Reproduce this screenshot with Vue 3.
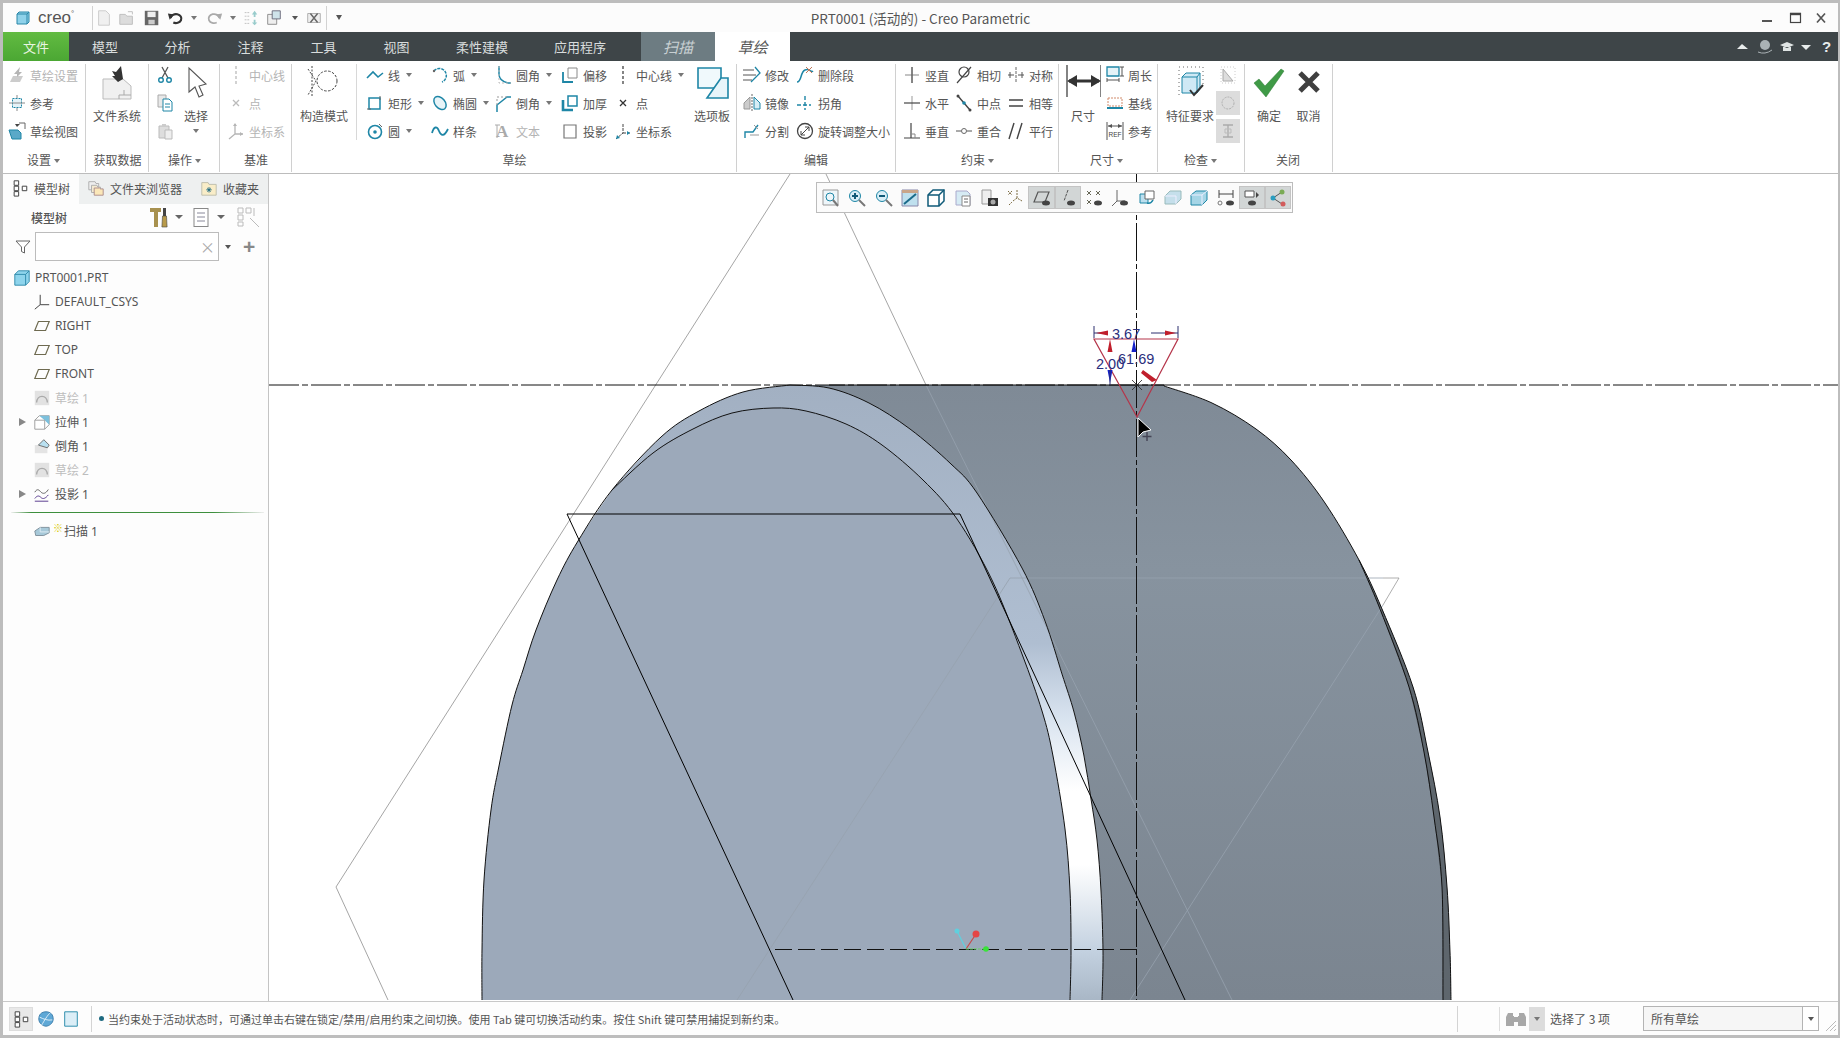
<template>
  <div class="app">
    <!-- 标题栏 -->
    <header class="titlebar">
      <div class="qat">
        <svg class="logo" width="16" height="16" viewBox="0 0 16 16" v-html="icons.logo"></svg>
        <span class="brand">creo<sup>°</sup></span>
        <i class="qat-sep"></i>
        <span v-for="q in quick" :key="q.k" class="qat-item" :style="{ width: q.w + 'px' }">
          <svg v-if="q.icon" width="18" height="18" viewBox="0 0 20 20" v-html="icons[q.icon]"></svg>
          <b v-else class="caret" :class="{ dark: q.dark }"></b>
        </span>
        <i class="qat-sep second"></i>
        <span class="qat-item last"><b class="caret dark bar"></b></span>
      </div>
      <div class="doc-title">PRT0001 (活动的) - Creo Parametric</div>
      <div class="win-btns">
        <svg width="74" height="18" viewBox="0 0 74 18">
          <path d="M6 12h10" stroke="#555" stroke-width="2" />
          <rect x="34.500" y="4.500" width="10" height="9" fill="none" stroke="#444" stroke-width="1.200" />
          <path d="M34 5h11" stroke="#444" stroke-width="2.400" />
          <path d="M61 4.500l8 9M69 4.500l-8 9" stroke="#555" stroke-width="1.700" />
        </svg>
      </div>
    </header>

    <!-- 选项卡 -->
    <nav class="tabbar">
      <span class="tab file">文件</span>
      <span v-for="t in tabs" :key="t.text" class="tab" :style="{ width: t.w + 'px' }">{{ t.text }}</span>
      <span class="tab ctx">扫描</span>
      <span class="tab active">草绘</span>
      <div class="tab-tools">
        <svg width="100" height="20" viewBox="0 0 100 20">
          <path d="M4 12l5-5 6 5z" fill="#e8ecec" />
          <circle cx="32" cy="8" r="5" fill="#aab2b5" />
          <path d="M25 15q7 3 14-2" stroke="#aab2b5" fill="none" />
          <path d="M47 8l7-3 7 3-7 3z M50 10v4h8v-4" fill="#dfe4e4" />
          <path d="M68 8h10l-5 5z" fill="#e8ecec" />
          <text x="89" y="15" class="help">?</text>
        </svg>
      </div>
    </nav>

    <!-- 功能区 -->
    <section class="ribbon">
      <div v-for="g in groups" :key="g.label" class="group" :class="'g-' + g.key">
        <div class="body">
          <template v-for="(c, i) in g.cols" :key="i">
            <div v-if="c.big" class="big" :class="{ sep: c.sep }" :style="{ width: c.w + 'px' }">
              <svg class="big-icon" :width="c.size || 36" :height="36" :viewBox="`0 0 ${c.size || 36} 36`" v-html="icons[c.icon]"></svg>
              <span class="big-text">{{ c.big }}</span>
              <b v-if="c.arrow" class="caret"></b>
            </div>
            <div v-else class="col" :style="{ width: c.w + 'px' }">
              <div v-for="it in c.items" :key="it.icon" class="item" :class="{ off: it.off }">
                <span class="ibox" :class="{ boxed: it.boxed }">
                  <svg width="20" height="20" viewBox="0 0 20 20" v-html="icons[it.icon]"></svg>
                </span>
                <span v-if="it.text" class="itext">{{ it.text }}</span>
                <b v-if="it.arrow" class="caret"></b>
              </div>
            </div>
          </template>
        </div>
        <div class="group-label">{{ g.label }}<b v-if="g.arrow" class="caret"></b></div>
      </div>
    </section>

    <div class="main">
      <!-- 模型树 -->
      <aside class="panel">
        <div class="panel-tabs">
          <span class="ptab on">
            <svg width="18" height="18" viewBox="0 0 20 20" v-html="icons.tree"></svg>模型树
          </span>
          <span class="ptab browser">
            <svg width="18" height="18" viewBox="0 0 20 20" v-html="icons.folders"></svg>文件夹浏览器
          </span>
          <span class="ptab fav">
            <svg width="18" height="18" viewBox="0 0 20 20" v-html="icons.favorite"></svg>收藏夹
          </span>
        </div>
        <div class="panel-tools">
          <strong>模型树</strong>
          <svg width="112" height="24" viewBox="0 0 112 24">
            <path d="M0 3h11v4H8v15H4V7H0z" fill="#a8914f" />
            <path d="M13 3h3v8h-3z" fill="#444" />
            <path d="M12.500 11h4l.6 11h-5.200z" fill="#b89a4a" stroke="#444" stroke-width=".6" />
            <path d="M25 10h8l-4 4z" fill="#666" />
            <rect x="44" y="3.500" width="14" height="18" fill="#fff" stroke="#888" />
            <path d="M47 8h8M47 12h8M47 16h8" stroke="#889" />
            <path d="M67 10h8l-4 4z" fill="#666" />
            <path d="M88 3h5v5h-5zM88 10h5v5h-5zM88 17h5v4h-5zM96 3h5v5h-5zM104 3v8M100 13l9 9" stroke="#bbb" fill="none" />
          </svg>
        </div>
        <div class="search">
          <svg width="16" height="16" viewBox="0 0 16 16">
            <path d="M1 2h14l-5.500 6v6l-3-1.500V8z" fill="#fff" stroke="#666" />
          </svg>
          <div class="search-box"><span>×</span></div>
          <b class="caret dark"></b>
          <span class="plus">+</span>
        </div>
        <ul class="tree">
          <li v-for="n in tree" :key="n.text" :class="{ root: n.root, muted: n.dim }">
            <b v-if="n.open" class="expander"></b>
            <svg width="18" height="18" viewBox="0 0 20 20" v-html="icons[n.icon]"></svg>
            <span>{{ n.text }}</span>
          </li>
          <li class="insert-line"></li>
          <li class="sweep">
            <svg width="18" height="18" viewBox="0 0 20 20" v-html="icons.sweep"></svg>
            <em>※</em><span>扫描 1</span>
          </li>
        </ul>
      </aside>

      <!-- 图形区 -->
      <div class="canvas">
        <svg class="scene" width="1569" height="827" viewBox="269 174 1569 827">
          <defs>
            <linearGradient id="sideFill" gradientUnits="userSpaceOnUse" x1="0" y1="385" x2="0" y2="1000">
              <stop offset="0" stop-color="#7f8a96" />
              <stop offset="0.3" stop-color="#87939f" />
              <stop offset="1" stop-color="#7b8590" />
            </linearGradient>
            <linearGradient id="bandFill" gradientUnits="userSpaceOnUse" x1="0" y1="385" x2="0" y2="1000">
              <stop offset="0" stop-color="#a2b0c2" />
              <stop offset="0.42" stop-color="#afbed1" />
              <stop offset="0.54" stop-color="#d8e3ef" />
              <stop offset="0.66" stop-color="#ffffff" />
              <stop offset="0.78" stop-color="#ffffff" />
              <stop offset="0.92" stop-color="#c3d1e0" />
              <stop offset="1" stop-color="#a9b7c6" />
            </linearGradient>
          </defs>

          <path :d="sidePath" fill="url(#sideFill)" />
          <path :d="stripePath" fill="#5e666d" />
          <path :d="bandPath" fill="url(#bandFill)" />
          <path :d="frontPath" fill="#9ca9ba" />

          <!-- 基准平面 -->
          <g class="datum">
            <path d="M790 174L336 887L388 1000" />
            <path d="M826 174L926 385" />
          </g>
          <g class="datum faint">
            <path d="M926 385L1232 1000" />
            <path d="M737 1000L1010 578L1383 578" />
            <path d="M1130 1000L1383 605" />
          </g>
          <path d="M1383 578H1399L1383 605" class="datum-end" />

          <!-- 轮廓 -->
          <path :d="outerEdge" class="edge" />
          <path :d="innerEdge" class="edge" />
          <path :d="bandEdge" class="edge" />
          <path :d="rimEdge" class="edge" />
          <path d="M793 1000L567 514H960L1185 1000" class="edge sketch" />

          <!-- 中心线 -->
          <path d="M269 385H1838" class="center" />
          <path d="M1136.500 174V1000" class="center vertical" />
          <path d="M775 949.500H1143" class="center short" />

          <!-- 坐标 -->
          <path d="M966 949L957 931" stroke="#5fd0de" stroke-width="1.200" />
          <path d="M966 949L976 934" stroke="#c64a4a" stroke-width="1.200" />
          <path d="M966 949H986" stroke="#62d460" stroke-dasharray="3 1" />
          <circle cx="957" cy="931" r="2.500" fill="#5fd0de" />
          <circle cx="976" cy="934" r="3.500" fill="#e54545" />
          <circle cx="986" cy="949" r="2.800" fill="#39e33a" />

          <!-- 尺寸标注 -->
          <path d="M1094 339H1178L1137 417Z" fill="none" stroke="#b5354a" stroke-width="1.200" />
          <path d="M1094 326V338M1178 326V338M1094 333H1108M1151 333H1178" stroke="#2c2f6e" />
          <path d="M1096 333l12-2.500v5zM1176 333l-11-2.500v5z M1110 339l-2.500 13h5z M1143 370l14 10-5 2-11-9z" fill="#c01f2c" />
          <path d="M1134 339l-2.500 13h5zM1110 383l-2.500-13h5z" fill="#1421c8" />
          <path d="M1110 370V385" stroke="#2c2f6e" />
          <path d="M1132 380l10 10M1142 380l-10 10" stroke="#222" stroke-width=".8" />
          <text x="1112" y="339" class="dim-text">3.67</text>
          <text x="1118" y="364" class="dim-text">61.69</text>
          <text x="1096" y="369" class="dim-text">2.00</text>

          <!-- 光标 -->
          <path d="M1138 418V437L1143 432L1151 430Z" fill="#000" stroke="#fff" />
          <path d="M1147 432v9M1142.500 436.500h9" stroke="#445" stroke-width="1.400" />
        </svg>

        <div class="float-bar">
          <span v-for="(b, i) in viewBtns" :key="i" class="fb" :class="{ on: b.on }">
            <svg width="20" height="20" viewBox="0 0 20 20" v-html="icons[b.icon]"></svg>
          </span>
        </div>
      </div>
    </div>

    <!-- 状态栏 -->
    <footer class="statusbar">
      <span class="st-btn boxed">
        <svg width="18" height="18" viewBox="0 0 20 20" v-html="icons.tree"></svg>
      </span>
      <span class="st-btn">
        <svg width="18" height="20" viewBox="0 0 20 20" v-html="icons.globe"></svg>
      </span>
      <span class="st-btn">
        <svg width="18" height="20" viewBox="0 0 20 20" v-html="icons.pane"></svg>
      </span>
      <i class="st-sep"></i>
      <i class="bullet"></i>
      <span class="msg">当约束处于活动状态时，可通过单击右键在锁定/禁用/启用约束之间切换。使用 Tab 键可切换活动约束。按住 Shift 键可禁用捕捉到新约束。</span>
      <i class="st-sep far"></i>
      <span class="finder">
        <svg width="24" height="20" viewBox="0 0 24 20">
          <path d="M4 4h5v3h1v10H2V8zM15 4h5l2 4v9h-8V7h1zM10 8h4v5h-4z" fill="#a8a8a8" />
        </svg>
        <em><b class="caret"></b></em>
      </span>
      <span class="picked">选择了 3 项</span>
      <div class="filter">
        <span>所有草绘</span>
        <em><b class="caret dark"></b></em>
      </div>
      <svg class="grip" width="12" height="12" viewBox="0 0 12 12">
        <path d="M2 12L12 2M6 12l6-6M10 12l2-2" stroke="#bbb" />
      </svg>
    </footer>
  </div>
</template>

<script setup>
// 把采样点连成平滑曲线
const smooth = (pts) => {
  let d = `M${pts[0][0]} ${pts[0][1]}`;
  for (let i = 0; i < pts.length - 1; i++) {
    const a = pts[i - 1] || pts[i];
    const b = pts[i];
    const c = pts[i + 1];
    const e = pts[i + 2] || c;
    const c1 = [b[0] + (c[0] - a[0]) / 6, b[1] + (c[1] - a[1]) / 6];
    const c2 = [c[0] - (e[0] - b[0]) / 6, c[1] - (e[1] - b[1]) / 6];
    d += `C${c1[0].toFixed(1)} ${c1[1].toFixed(1)} ${c2[0].toFixed(1)} ${c2[1].toFixed(1)} ${c[0]} ${c[1]}`;
  }
  return d;
};
const lineTo = (pts) => pts.map((p) => `L${p[0]} ${p[1]}`).join("");

const leftOuter = [[482, 1000], [482, 950], [484, 880], [491, 810], [499, 766], [512, 705], [523, 670], [536, 630], [557, 580], [578, 541], [612, 490], [661, 437], [699, 411], [743, 392], [790, 385]];
const topOuter = [[790, 385], [829, 388], [869, 403], [910, 429], [951, 464], [977, 493], [1022, 568], [1045, 621], [1062, 674], [1074, 712], [1084, 756], [1091, 799], [1097, 840], [1101, 891], [1103, 952], [1102, 1000]];
const inner = [[612, 490], [653, 453], [693, 429], [732, 413], [773, 408], [806, 411], [846, 424], [882, 445], [923, 480], [957, 519], [992, 580], [1022, 654], [1042, 711], [1053, 756], [1065, 829], [1070, 891], [1071, 952], [1070, 1000]];
const sideOuter = [[1164, 386], [1212, 403], [1256, 429], [1291, 460], [1325, 503], [1359, 560], [1382, 609], [1413, 687], [1428, 752], [1440, 817], [1447, 887], [1450, 952], [1451, 1000]];
const stripeInner = [[1359, 560], [1380, 609], [1409, 687], [1424, 752], [1434, 817], [1442, 887], [1443, 1000]];

const rev = (a) => [...a].reverse();
const frontPath = smooth(leftOuter.slice(0, 11)) + smooth(inner).replace(/^M/, "L") + "Z";
const bandPath = smooth(leftOuter.slice(10)) + smooth(topOuter).replace(/^M/, "L") + lineTo(rev(inner)) + "Z";
const sidePath = "M790 385H1164" + smooth(sideOuter).replace(/^M/, "L") + "L1102 1000" + lineTo(rev(topOuter)) + "Z";
const stripePath = smooth(sideOuter.slice(5)) + lineTo(rev(stripeInner)) + "Z";
const outerEdge = smooth(leftOuter);
const innerEdge = smooth(inner);
const bandEdge = smooth(topOuter);
const rimEdge = "M829 385H1164" + smooth(sideOuter).replace(/^M/, "L") + "M1359 560" + smooth(stripeInner).replace(/^M/, "L");

const quick = [
  { k: "new", icon: "qnew", w: 22 },
  { k: "open", icon: "qopen", w: 24 },
  { k: "save", icon: "qsave", w: 26 },
  { k: "undo", icon: "qundo", w: 22 },
  { k: "c1", w: 14 },
  { k: "redo", icon: "qredo", w: 26 },
  { k: "c2", w: 12 },
  { k: "regen", icon: "qregen", w: 24 },
  { k: "win", icon: "qwin", w: 22 },
  { k: "c3", w: 20, dark: true },
  { k: "close", icon: "qclose", w: 18 },
];

const tabs = [
  { text: "模型", w: 72 },
  { text: "分析", w: 73 },
  { text: "注释", w: 73 },
  { text: "工具", w: 73 },
  { text: "视图", w: 73 },
  { text: "柔性建模", w: 98 },
  { text: "应用程序", w: 98 },
];

const groups = [
  {
    key: "settings", label: "设置", arrow: true,
    cols: [{ w: 78, items: [
      { icon: "setup", text: "草绘设置", off: true },
      { icon: "reference", text: "参考" },
      { icon: "sview", text: "草绘视图" },
    ] }],
  },
  {
    key: "fetch", label: "获取数据",
    cols: [{ big: "文件系统", icon: "filesys", w: 62, size: 36 }],
  },
  {
    key: "ops", label: "操作", arrow: true,
    cols: [
      { w: 21, items: [{ icon: "cut" }, { icon: "copy" }, { icon: "paste", off: true }] },
      { big: "选择", icon: "cursor", w: 40, arrow: true },
    ],
  },
  {
    key: "datum", label: "基准",
    cols: [{ w: 66, items: [
      { icon: "cline", text: "中心线", off: true },
      { icon: "point", text: "点", off: true },
      { icon: "csys", text: "坐标系", off: true },
    ] }],
  },
  {
    key: "sketch", label: "草绘",
    cols: [
      { big: "构造模式", icon: "construct", w: 64, sep: true },
      { w: 65, items: [
        { icon: "line", text: "线", arrow: true },
        { icon: "rect", text: "矩形", arrow: true },
        { icon: "circle", text: "圆", arrow: true },
      ] },
      { w: 63, items: [
        { icon: "arc", text: "弧", arrow: true },
        { icon: "ellipse", text: "椭圆", arrow: true },
        { icon: "spline", text: "样条" },
      ] },
      { w: 67, items: [
        { icon: "fillet", text: "圆角", arrow: true },
        { icon: "chamfer", text: "倒角", arrow: true },
        { icon: "stext", text: "文本", off: true },
      ] },
      { w: 53, items: [
        { icon: "offset", text: "偏移" },
        { icon: "thicken", text: "加厚" },
        { icon: "project", text: "投影" },
      ] },
      { w: 74, items: [
        { icon: "cline2", text: "中心线", arrow: true },
        { icon: "point2", text: "点" },
        { icon: "csys2", text: "坐标系" },
      ] },
      { big: "选项板", icon: "palette", w: 50 },
    ],
  },
  {
    key: "edit", label: "编辑",
    cols: [
      { w: 53, items: [
        { icon: "modify", text: "修改" },
        { icon: "mirror", text: "镜像" },
        { icon: "divide", text: "分割" },
      ] },
      { w: 101, items: [
        { icon: "delseg", text: "删除段" },
        { icon: "corner", text: "拐角" },
        { icon: "rotate", text: "旋转调整大小" },
      ] },
    ],
  },
  {
    key: "cons", label: "约束", arrow: true,
    cols: [
      { w: 52, items: [
        { icon: "vert", text: "竖直" },
        { icon: "horz", text: "水平" },
        { icon: "perp", text: "垂直" },
      ] },
      { w: 52, items: [
        { icon: "tangent", text: "相切" },
        { icon: "midpt", text: "中点" },
        { icon: "coinc", text: "重合" },
      ] },
      { w: 52, items: [
        { icon: "symm", text: "对称" },
        { icon: "equal", text: "相等" },
        { icon: "para", text: "平行" },
      ] },
    ],
  },
  {
    key: "dims", label: "尺寸", arrow: true,
    cols: [
      { big: "尺寸", icon: "dim", w: 44 },
      { w: 52, items: [
        { icon: "perim", text: "周长" },
        { icon: "base", text: "基线" },
        { icon: "dimref", text: "参考" },
      ] },
    ],
  },
  {
    key: "check", label: "检查", arrow: true,
    cols: [
      { big: "特征要求", icon: "feat", w: 56 },
      { w: 24, items: [
        { icon: "chk1", off: true },
        { icon: "chk2", boxed: true },
        { icon: "chk3", boxed: true },
      ] },
    ],
  },
  {
    key: "close", label: "关闭",
    cols: [
      { big: "确定", icon: "ok", w: 40 },
      { big: "取消", icon: "cancel", w: 39 },
    ],
  },
];

const tree = [
  { text: "PRT0001.PRT", icon: "part", root: true },
  { text: "DEFAULT_CSYS", icon: "tcsys" },
  { text: "RIGHT", icon: "plane" },
  { text: "TOP", icon: "plane" },
  { text: "FRONT", icon: "plane" },
  { text: "草绘 1", icon: "tsketch", dim: true },
  { text: "拉伸 1", icon: "extrude", open: true },
  { text: "倒角 1", icon: "tchamfer" },
  { text: "草绘 2", icon: "tsketch", dim: true },
  { text: "投影 1", icon: "tproject", open: true },
];

const viewBtns = [
  { icon: "vRefit" }, { icon: "vIn" }, { icon: "vOut" }, { icon: "vRepaint" }, { icon: "vCube" },
  { icon: "vViews" }, { icon: "vCam" }, { icon: "vDatums" }, { icon: "vPlane", on: true },
  { icon: "vAxis", on: true }, { icon: "vPts" }, { icon: "vCsys" }, { icon: "vRot" },
  { icon: "vBox" }, { icon: "vGlass" }, { icon: "vDims" }, { icon: "vCons", on: true },
  { icon: "vNodes", on: true },
];

const T = "#1e86a6";
const G = "#8a8a8a";
const icons = {
  logo: '<path d="M2 4l2-2h10v10l-2 2H2z" fill="#8fd2ea" stroke="#2a87a8"/><path d="M2 4h10v10M12 4l2-2" fill="none" stroke="#2a87a8"/>',
  qnew: '<path d="M4 2h8l4 4v12H4z" fill="#f0f0f0" stroke="#c8c8c8"/>',
  qopen: '<path d="M2 6h6l2 2h6v9H2z" fill="#dcdcdc" stroke="#bbb"/><path d="M11 3h5v3" stroke="#bbb" fill="none"/>',
  qsave: '<path d="M2 2h15v16H2z" fill="#666"/><path d="M5 3h9v6H5z" fill="#eee"/><path d="M6 12h7v5H6z" fill="#ccc"/>',
  qundo: '<path d="M4 10a6 5 0 1 1 3 5" fill="none" stroke="#333" stroke-width="2.400"/><path d="M1 5l7 1-5 6z" fill="#333"/>',
  qredo: '<path d="M16 10a6 5 0 1 0-3 5" fill="none" stroke="#aaa" stroke-width="2"/><path d="M19 5l-7 1 5 6z" fill="#aaa"/>',
  qregen: '<path d="M3 4h5M3 8h5M3 12h5M3 16h5" stroke="#bbb" stroke-dasharray="2 1"/><path d="M11 6l3-4 3 4h-2v3h-2V6zM13 12h2v3h2l-3 3-3-3h2z" fill="#9cc"/>',
  qwin: '<path d="M3 6h10v11H3z" fill="#eee" stroke="#888"/><path d="M8 2h9v9H8z" fill="#cfe3ea" stroke="#667"/>',
  qclose: '<path d="M3 5h14v10H3z" fill="#eee" stroke="#aaa"/><path d="M6 5l8 10M14 5l-8 10" stroke="#666" stroke-width="1.600"/>',
  setup: '<path d="M3 17l3-6h10l-3 6z" fill="#ccc"/><path d="M13 2L7 9h3v3l5-5h-3z" fill="#b5b5b5"/>',
  reference: `<rect x="5.500" y="5.500" width="9" height="9" fill="#e6f3f8" stroke="${T}" stroke-dasharray="2 1"/><path d="M2 10h16M10 2v3M10 15v3" stroke="${G}"/>`,
  sview: `<path d="M2 9h9l3 3v6H5z" fill="#5aa9c8" stroke="${T}"/><path d="M12 2h6v6" fill="none" stroke="#666"/><path d="M8 3l5 0-3 3z" fill="#444"/>`,
  filesys: '<path d="M4 14h20l8 7v13H4z" fill="#f0f0f0" stroke="#bbb"/><path d="M20 30h12M20 30v4M25 25v5" stroke="#aaa"/><path d="M24 14l-2-13-5 6-4-1 3 5-3 0 6 6z" fill="#333"/>',
  cut: `<path d="M7 2l6 11M13 2L7 13" stroke="#555" stroke-width="1.300"/><circle cx="6" cy="15" r="2.300" fill="none" stroke="${T}" stroke-width="1.400"/><circle cx="14" cy="15" r="2.300" fill="none" stroke="${T}" stroke-width="1.400"/>`,
  copy: `<path d="M3 2h8v12H3z" fill="#e8e8e8" stroke="#aaa"/><path d="M8 6h6l3 3v9H8z" fill="#fff" stroke="${T}"/><path d="M10 11h5M10 14h5" stroke="${T}"/>`,
  paste: '<path d="M4 5h10v12H4z" fill="#ddd" stroke="#bbb"/><path d="M7 3h4v3H7z" fill="#ccc"/><path d="M10 9h7v9h-7z" fill="#eee" stroke="#bbb"/>',
  cursor: '<path d="M11 3v24l6-5 4 10 4-2-4-9 7-2z" fill="#fff" stroke="#555" stroke-width="1.100"/>',
  cline: '<path d="M10 1v18" stroke="#bbb" stroke-dasharray="3 2" stroke-width="1.300"/>',
  point: '<path d="M7 7l6 6M13 7l-6 6" stroke="#bbb" stroke-width="1.300"/>',
  csys: '<path d="M9 3v10l-6 5M9 13h8" stroke="#b5b5b5" stroke-width="1.300" fill="none"/><path d="M17 13l-3-2v4z M9 2l-2 3h4z" fill="#b5b5b5"/>',
  construct: '<path d="M6 1v31M2 4l8 12-8 14" fill="none" stroke="#444" stroke-dasharray="2 1.500"/><circle cx="21" cy="16" r="10" fill="none" stroke="#444" stroke-dasharray="2.500 1.500"/>',
  line: `<path d="M2 13l6-6 5 5 5-4" fill="none" stroke="${T}" stroke-width="1.600"/>`,
  rect: `<path d="M4 5h11v11H4z" fill="none" stroke="${T}" stroke-width="1.500"/><path d="M15 3v4M2 16h4" stroke="#666"/>`,
  circle: `<circle cx="10" cy="11" r="6.500" fill="none" stroke="${T}" stroke-width="1.600"/><circle cx="10" cy="11" r="1.800" fill="${T}"/><path d="M14 3l3 3" stroke="#666"/>`,
  arc: `<path d="M4 6a7 7 0 1 1 8 11" fill="none" stroke="${T}" stroke-width="1.500" stroke-dasharray="3 1"/><circle cx="4" cy="6" r="1.200" fill="#666"/>`,
  ellipse: `<ellipse cx="10" cy="10" rx="5" ry="7.500" transform="rotate(-40 10 10)" fill="#e8f4f8" stroke="${T}" stroke-width="1.500"/>`,
  spline: `<path d="M2 12c2-7 5-7 7-2s5 6 9-2" fill="none" stroke="${T}" stroke-width="1.800"/>`,
  fillet: `<path d="M6 1v8q0 7 9 9h3" fill="none" stroke="${T}" stroke-width="1.500"/><path d="M6 1v17h12" fill="none" stroke="#bbb" stroke-dasharray="2 2"/>`,
  chamfer: `<path d="M4 19V12L14 4h4" fill="none" stroke="${T}" stroke-width="1.500"/><path d="M4 12V4h10" fill="none" stroke="#999" stroke-dasharray="2 2"/>`,
  stext: '<text x="3" y="16" font-family="Liberation Serif" font-size="17" fill="#aaa" font-weight="700">A</text><path d="M2 4h5M4 4v13" stroke="#aaa"/>',
  offset: `<path d="M8 3h9v10H8z" fill="#fff" stroke="${G}"/><path d="M3 7v10h10" fill="none" stroke="${T}" stroke-width="1.800"/>`,
  thicken: `<path d="M8 3h9v10H8z" fill="#fff" stroke="${T}" stroke-width="1.500"/><path d="M3 7v10h10" fill="none" stroke="${T}" stroke-width="2.600"/>`,
  project: `<path d="M4 4h12v13H4z" fill="#fff" stroke="#777" stroke-width="1.200"/>`,
  cline2: '<path d="M10 1v18" stroke="#444" stroke-dasharray="3 2" stroke-width="1.300"/>',
  point2: '<path d="M7 7l6 6M13 7l-6 6" stroke="#333" stroke-width="1.300"/>',
  csys2: `<path d="M10 3v9l-7 6M10 12h7" stroke="#444" fill="none" stroke-dasharray="3 1"/><path d="M3 18l1-4 3 3zM17 12l-3-2v4z" fill="${T}"/>`,
  palette: `<path d="M4 3h23v20H4z" fill="#f0f9fc" stroke="${T}" stroke-width="1.600"/><path d="M27 13L13 33h21V13z" fill="#e8f5fa" stroke="${T}" stroke-width="1.600"/>`,
  modify: `<path d="M1 5h11M1 10h13M1 15h9" stroke="#555"/><path d="M13 2l5 6-9 9" fill="none" stroke="${T}" stroke-width="1.300"/>`,
  mirror: `<path d="M10 1v18" stroke="#666" stroke-dasharray="2 1"/><path d="M8 4L2 10v6h6z" fill="#ccc" stroke="#999"/><path d="M12 4l6 6v6h-6z" fill="#d6edf5" stroke="${T}"/>`,
  divide: `<path d="M3 17v-6h8l5-7" fill="none" stroke="${T}" stroke-width="1.400"/><path d="M12 4l4 4M8 14h9" stroke="#999"/>`,
  delseg: `<path d="M2 17c5 0 3-10 8-12s6 3 8 1" fill="none" stroke="${T}" stroke-width="1.500"/><path d="M11 2l6 6M17 2l-6 6" stroke="#c0785a"/>`,
  corner: `<path d="M2 12h14M10 3v14" stroke="${T}" stroke-width="1.400" stroke-dasharray="4 2"/>`,
  rotate: '<circle cx="10" cy="10" r="7.500" fill="none" stroke="#444" stroke-width="1.300"/><path d="M6 14l8-8M14 6h-4M14 6v4M6 14h4M6 14v-4" stroke="#444" fill="none"/>',
  vert: `<path d="M10 2v16M3 10h14" stroke="#888" stroke-width="1.200"/><path d="M10 2v16" stroke="#555"/>`,
  horz: '<path d="M10 3v14" stroke="#999"/><path d="M2 10h16" stroke="#444" stroke-width="1.200"/>',
  perp: '<path d="M9 2v15M2 17h16" stroke="#444" stroke-width="1.200"/><path d="M9 13h4v4" fill="none" stroke="#888"/>',
  tangent: '<circle cx="10" cy="7" r="5" fill="none" stroke="#444" stroke-width="1.200"/><path d="M3 18L17 2" stroke="#444" stroke-width="1.200"/>',
  midpt: `<path d="M4 3l12 14" stroke="#444" stroke-width="1.400"/><circle cx="4" cy="3" r="1.500" fill="#444"/><circle cx="10" cy="10" r="1.800" fill="${T}"/><circle cx="16" cy="17" r="1.500" fill="#444"/>`,
  coinc: '<path d="M2 10h5M13 10h5" stroke="#555"/><circle cx="10" cy="10" r="2.500" fill="#fff" stroke="#666"/>',
  symm: '<path d="M10 2v16" stroke="#666" stroke-dasharray="3 1"/><path d="M2 10h6M12 10h6M4 7v6M16 7v6" stroke="#555"/>',
  equal: '<path d="M3 7h14M3 13h14" stroke="#444" stroke-width="1.400"/>',
  para: '<path d="M8 2L3 18M16 2l-5 16" stroke="#444" stroke-width="1.400"/>',
  dim: '<path d="M2 0v32M36 0v32" stroke="#333" stroke-width="1.200"/><path d="M4 16h30" stroke="#333" stroke-width="3"/><path d="M2 16l10-6v12zM36 16l-10-6v12z" fill="#333"/>',
  perim: `<path d="M2 2h12v9H2z" fill="#e5f3f8" stroke="${T}" stroke-width="1.300"/><path d="M17 2v9M15 2h4M15 11h4M2 15h12M2 13v4M14 13v4" stroke="#555"/>`,
  base: `<path d="M3 5h14v8H3z" fill="#fff" stroke="#d08a6a" stroke-dasharray="2 1"/><path d="M2 15h16" stroke="${T}" stroke-width="2"/>`,
  dimref: '<path d="M2 1v18M18 1v18M3 5h14" stroke="#555"/><path d="M3 5l4-2v4zM17 5l-4-2v4z" fill="#555"/><text x="3.500" y="16" font-family="Liberation Sans" font-size="6.500" fill="#444">REF</text>',
  feat: `<path d="M7 2h24M7 30V2M31 2v20" stroke="#666" stroke-dasharray="1 3"/><path d="M10 12l4-4h14v16l-3 4H10z" fill="#cfe9f5" stroke="${T}"/><path d="M10 12h15v16M25 12l3-4" fill="none" stroke="${T}"/><path d="M18 25l4 5 9-10" fill="none" stroke="#333" stroke-width="2"/>`,
  chk1: '<path d="M3 2h14v16H3z" fill="none" stroke="#ccc" stroke-dasharray="1 2"/><path d="M5 4l10 12H5z" fill="#ddd" stroke="#aaa"/>',
  chk2: '<circle cx="10" cy="10" r="6" fill="none" stroke="#b0b0b0" stroke-dasharray="2 1"/>',
  chk3: '<path d="M5 4h10M5 16h10M10 4v12" stroke="#aaa" stroke-width="1.300"/><path d="M7 8h6v4H7z" fill="none" stroke="#bbb"/>',
  ok: '<path d="M3 18l5-4 6 7L30 4l3 2-18 26z" fill="#3f9a46" stroke="#2d7a35" stroke-width=".5"/>',
  cancel: '<path d="M9 8l18 18M27 8L9 26" stroke="#3f3f3f" stroke-width="5"/>',
  tree: '<path d="M3.500 2h5v5h-5zM3.500 8h5v5h-5zM3.500 14h5v5h-5zM12.500 8h5v5h-5z" fill="#fff" stroke="#444" stroke-width="1.100"/>',
  folders: '<path d="M2 3h7l1 2h3v7H2z" fill="#eee" stroke="#aaa"/><path d="M5 7h6l1 2h3v6H5z" fill="#f4ead0" stroke="#aaa"/><path d="M8 10h6l1 1h3v7H8z" fill="#fbe7b8" stroke="#a88"/>',
  favorite: '<path d="M2 4h7l1 2h8v12H2z" fill="#f9edc8" stroke="#bba"/><path d="M10 9v6M7 12h6M8 10l4 4M12 10l-4 4" stroke="#1e6a80"/>',
  part: '<path d="M2 6l4-4h12v12l-4 4H2z" fill="#8ed4ec" stroke="#2a87a8"/><path d="M2 6h12v12M14 6l4-4" fill="none" stroke="#2a87a8"/>',
  tcsys: '<path d="M8 2v11l-6 5M8 13h10" stroke="#444" stroke-width="1.100" fill="none"/>',
  plane: '<path d="M6 5h12l-4 10H2z" fill="none" stroke="#6e6a50" stroke-width="1.300"/>',
  tsketch: '<path d="M2 2h16v16H2z" fill="#e2e2e2"/><path d="M4 15c1-9 11-9 12 0" fill="none" stroke="#aaa" stroke-width="1.500"/>',
  extrude: `<path d="M2 8l5-5h11v10l-5 5H2z" fill="#fff" stroke="#999"/><path d="M7 3h11v10L13 8z" fill="#7cc0dc"/><path d="M2 8h11v10" fill="none" stroke="#999"/>`,
  tchamfer: '<path d="M2 9h14v9H2z" fill="#e4e4e4"/><path d="M6 9l6-6 6 6-2 3z" fill="#b9e0f0" stroke="#666"/>',
  tproject: '<path d="M2 8c3-5 5-2 7 0s5 2 8-3" fill="none" stroke="#666" stroke-width="1.100"/><path d="M2 15c3-4 5-3 7-1s5 1 8-3M2 18h15" fill="none" stroke="#5b3e90" stroke-width="1.100"/>',
  sweep: '<path d="M2 10l6-4h10v6l-6 3H3z" fill="#a7c9d9" stroke="#7a8c99"/><path d="M8 6v5h10" fill="none" stroke="#e2eef5"/>',
  globe: '<path d="M10 2c5 0 8 3 8 8s-5 8-8 8-8-3-8-8 3-8 8-8z" fill="#5fa8d6" stroke="#3a7ba8"/><path d="M5 17C8 12 12 5 15 3M3 8c4 2 9 4 14 3" stroke="#e7f3fb" fill="none"/>',
  pane: `<path d="M3 2h14v16H3z" fill="#dbeef7" stroke="${T}"/>`,
  vRefit: `<path d="M2 2h15v15H2z" fill="#eef6fa" stroke="#999"/><circle cx="9" cy="9" r="4" fill="none" stroke="${T}"/><path d="M12 12l5 6" stroke="#777" stroke-width="2"/>`,
  vIn: `<circle cx="8" cy="8" r="5.500" fill="#d8eef7" stroke="${T}"/><path d="M5 8h6M8 5v6" stroke="#0f5a78" stroke-width="2"/><path d="M12 12l6 6" stroke="#777" stroke-width="2"/>`,
  vOut: `<circle cx="8" cy="8" r="5.500" fill="#d8eef7" stroke="${T}"/><path d="M5 8h6" stroke="#0f5a78" stroke-width="2"/><path d="M12 12l6 6" stroke="#777" stroke-width="2"/>`,
  vRepaint: `<path d="M2 2h16v16H2z" fill="#bfe0ee" stroke="#88a"/><path d="M2 2h16v3H2z" fill="#c9a58a"/><path d="M4 16L16 6" stroke="#1a6a8a" stroke-width="2"/>`,
  vCube: '<path d="M2 7l5-5h11v11l-5 5H2z" fill="#fff" stroke="#0f5a78" stroke-width="1.500"/><path d="M2 7h11v11M13 7l5-5" fill="none" stroke="#0f5a78" stroke-width="1.500"/>',
  vViews: `<path d="M3 3h11l3 3v11H3z" fill="#d6ebf4" stroke="#aac"/><path d="M9 8h8v10H9z" fill="#fff" stroke="#888"/><path d="M11 11h4M11 14h4" stroke="#666"/>`,
  vCam: '<path d="M3 2h9v14H3z" fill="#eee" stroke="#999"/><path d="M9 10h10v8H9z" fill="#333"/><circle cx="14" cy="14" r="2.500" fill="#aaa"/>',
  vDatums: '<path d="M3 3l4 4M7 3L3 7M12 2v8M8 13l4-3 5 3M4 17l3-3" stroke="#7a6a40" stroke-dasharray="2 1" fill="none"/>',
  vPlane: '<path d="M6 4h11l-4 10H2z" fill="none" stroke="#555" stroke-width="1.200"/><ellipse cx="14" cy="15" rx="4" ry="2.500" fill="#444"/>',
  vAxis: '<path d="M10 2L6 13" stroke="#555" stroke-dasharray="3 1"/><ellipse cx="13" cy="15" rx="4" ry="2.500" fill="#444"/>',
  vPts: '<path d="M3 3l4 4M7 3L3 7M12 3l4 4M16 3l-4 4M3 12l4 4M7 12l-4 4" stroke="#665" /><ellipse cx="14" cy="15" rx="4" ry="2.500" fill="#444"/>',
  vCsys: '<path d="M7 2v11l-5 5M7 13h8" stroke="#666" fill="none"/><ellipse cx="14" cy="15" rx="4" ry="2.500" fill="#444"/>',
  vRot: `<path d="M3 6h8v9H3z" fill="#bcdfee" stroke="${T}"/><path d="M8 3h9v8H8z" fill="#fff" stroke="#666"/><path d="M10 15q4 1 6-3" fill="none" stroke="${T}" stroke-width="1.600"/>`,
  vBox: '<path d="M2 8l5-5h11v8l-5 5H2z" fill="#c5dfeb" stroke="#9bb"/><path d="M2 8h11v8" fill="none" stroke="#eef"/>',
  vGlass: `<path d="M2 7l5-4h11v9l-5 5H2z" fill="#a5d5e6" stroke="${T}"/><path d="M2 7h11v10M13 7l5-4" fill="none" stroke="#eef"/>`,
  vDims: '<path d="M3 2v8M17 2v8M3 6h14" stroke="#444"/><circle cx="4" cy="15" r="2" fill="none" stroke="#777"/><ellipse cx="14" cy="15" rx="4" ry="2.500" fill="#444"/>',
  vCons: '<path d="M3 3h9v6H3z" fill="#fff" stroke="#555"/><path d="M14 4v6l3-3z" fill="#444"/><ellipse cx="10" cy="15" rx="4" ry="2.500" fill="#444"/>',
  vNodes: '<path d="M5 10l9-6M5 10l9 6" stroke="#555"/><circle cx="5" cy="10" r="2.500" fill="#2a9dbf"/><circle cx="14" cy="4" r="2.500" fill="#7aab55"/><circle cx="15" cy="16" r="2.500" fill="#d25c5c"/>',
};
</script>

<style>
html,
body {
  margin: 0;
  background: #fff;
}
</style>

<style scoped>
.app {
  width: 1840px;
  height: 1038px;
  box-sizing: border-box;
  padding: 3px 2px 3px 3px;
  background: #bdbdbd;
  display: flex;
  flex-direction: column;
  overflow: hidden;
  font-family: "Noto Sans CJK SC", "Noto Sans", sans-serif;
  font-size: 12px;
  color: #555;
}
svg {
  display: block;
  flex: none;
}

.caret {
  display: inline-block;
  width: 0;
  height: 0;
  border-left: 3.5px solid transparent;
  border-right: 3.5px solid transparent;
  border-top: 4px solid #777;
}
.caret.dark {
  border-top-color: #555;
}

/* 标题栏 */
.titlebar {
  height: 29px;
  background: #fcfcfc;
  display: grid;
  grid-template-columns: 1fr auto 1fr;
  align-items: center;
}
.qat {
  display: flex;
  align-items: center;
  padding-left: 12px;
}
.brand {
  margin-left: 7px;
  width: 54px;
  font: 17px "Liberation Sans", sans-serif;
  color: #555;
}
.brand sup {
  font-size: 8px;
}
.qat-sep {
  width: 1px;
  height: 24px;
  background: #d2d2d2;
}
.qat-sep.second {
  margin-left: 3px;
}
.qat-item {
  display: flex;
  justify-content: center;
  align-items: center;
}
.qat-item.last {
  width: 24px;
}
.caret.bar {
  border-top-width: 5px;
}
.doc-title {
  font-size: 13.5px;
  color: #555;
}
.win-btns {
  display: flex;
  justify-content: flex-end;
  padding-right: 8px;
}

/* 选项卡 */
.tabbar {
  height: 29px;
  background: #3e4548;
  display: flex;
  color: #d9dddd;
  font-size: 13px;
}
.tab {
  display: flex;
  align-items: center;
  justify-content: center;
  padding-bottom: 1px;
  box-sizing: border-box;
}
.tab.file {
  width: 66px;
  background: linear-gradient(#62bb42, #4ba733);
  color: #e8f5e0;
}
.tab.ctx {
  width: 74px;
  background: #6d7c82;
  color: #c8d0d2;
  font-size: 15px;
  font-style: italic;
  margin-left: 12px;
}
.tab.active {
  width: 75px;
  background: #fff;
  color: #555;
  font-size: 15px;
  font-style: italic;
}
.tab-tools {
  margin-left: auto;
  display: flex;
  align-items: center;
  padding-right: 5px;
}
.help {
  font: 700 15px "Liberation Sans", sans-serif;
  fill: #e8ecec;
}

/* 功能区 */
.ribbon {
  height: 113px;
  box-sizing: border-box;
  background: #fff;
  border-bottom: 1px solid #bcbcbc;
  display: flex;
}
.group {
  position: relative;
  box-sizing: border-box;
  display: flex;
  flex-direction: column;
}
.group::after {
  content: "";
  position: absolute;
  right: 0;
  top: 3px;
  bottom: 1px;
  width: 1px;
  background: #d0d0d0;
}
.g-settings { width: 83px; padding-left: 4px; }
.g-fetch { width: 63px; }
.g-ops { width: 71px; padding-left: 6px; }
.g-datum { width: 72px; padding-left: 6px; }
.g-sketch { width: 445px; }
.g-edit { width: 159px; padding-left: 5px; }
.g-cons { width: 163px; padding-left: 6px; }
.g-dims { width: 99px; padding-left: 2px; }
.g-check { width: 87px; padding-left: 4px; }
.g-close { width: 88px; padding-left: 4px; }

.body {
  height: 85px;
  display: flex;
}
.group-label {
  height: 27px;
  line-height: 27px;
  text-align: center;
  color: #555;
  margin-left: -6px;
}
.group-label .caret {
  margin-left: 3px;
  vertical-align: 2px;
}
.g-fetch .group-label,
.g-sketch .group-label {
  margin-left: 0;
}
.col {
  flex: none;
  display: flex;
  flex-direction: column;
}
.item {
  height: 28px;
  display: flex;
  align-items: center;
  white-space: nowrap;
}
.ibox {
  width: 20px;
  height: 20px;
  flex: none;
}
.ibox.boxed {
  background: #dcdcdc;
  outline: 2px solid #dcdcdc;
}
.itext {
  margin-left: 3px;
}
.item .caret {
  margin-left: 6px;
}
.item.off .itext {
  color: #b4b4b4;
}
.big {
  flex: none;
  position: relative;
  display: flex;
  flex-direction: column;
  align-items: center;
  white-space: nowrap;
}
.big-icon {
  margin-top: 4px;
  margin-bottom: 2px;
}
.big-text {
  height: 26px;
  line-height: 26px;
}
.big.sep {
  margin-right: 9px;
}
.big.sep::after {
  content: "";
  position: absolute;
  right: -1px;
  top: 3px;
  bottom: 6px;
  width: 1px;
  background: #d8d8d8;
}

/* 主体 */
.main {
  flex: 1;
  min-height: 0;
  display: flex;
  background: #fff;
}
.panel {
  width: 266px;
  flex: none;
  box-sizing: border-box;
  border-right: 1px solid #c4c4c4;
  background: #fdfdfd;
}
.panel-tabs {
  height: 30px;
  display: flex;
  background: #eef0f0;
}
.ptab {
  display: flex;
  align-items: center;
  gap: 5px;
  white-space: nowrap;
  padding-bottom: 2px;
  box-sizing: border-box;
}
.ptab.on {
  width: 76px;
  background: #fdfdfd;
  padding-left: 8px;
}
.ptab.browser {
  width: 121px;
  padding-left: 8px;
}
.panel-tools {
  height: 28px;
  box-sizing: border-box;
  padding-bottom: 2px;
  display: flex;
  align-items: center;
  padding-left: 28px;
}
.panel-tools strong {
  font-weight: 500;
  width: 119px;
}
.search {
  height: 29px;
  display: flex;
  align-items: center;
  padding-left: 12px;
}
.search-box {
  width: 184px;
  height: 29px;
  box-sizing: border-box;
  margin-left: 4px;
  border: 1px solid #bcbcbc;
  background: #fff;
  display: flex;
  align-items: center;
  justify-content: flex-end;
  padding-right: 3px;
  color: #aaa;
  font-size: 15px;
}
.search .caret {
  margin-left: 6px;
}
.plus {
  margin-left: 12px;
  color: #888;
  font: 700 21px "Liberation Sans", sans-serif;
  line-height: 20px;
}
.tree {
  list-style: none;
  margin: 5px 0 0;
  padding: 0;
  font-size: 12px;
  font-family: "Noto Sans", "Noto Sans CJK SC", sans-serif;
}
.tree li {
  height: 24px;
  position: relative;
  display: flex;
  align-items: center;
  gap: 4px;
  padding-left: 30px;
}
.tree li > span {
  margin-top: -1px;
}
.tree li.root {
  padding-left: 10px;
}
.tree li.muted {
  color: #bdbdbd;
}
.expander {
  position: absolute;
  left: 16px;
  border-left: 7px solid #888;
  border-top: 4.5px solid transparent;
  border-bottom: 4.5px solid transparent;
}
.tree li.insert-line {
  height: 1px;
  margin: 6px 4px 7px 8px;
  padding: 0;
  background: linear-gradient(90deg, #f0f0f0, #3d8f3d 8%, #3d8f3d 80%, #eee);
}
.tree li.sweep {
  gap: 2px;
  margin-top: -1px;
}
.sweep em {
  font-style: normal;
  color: #d8c800;
  font-size: 10px;
  margin: -8px -1px 0 0;
  font-family: "Noto Sans CJK SC", sans-serif;
}

.canvas {
  flex: 1;
  position: relative;
  overflow: hidden;
  background: #fff;
}
.scene {
  position: absolute;
  inset: 0;
}
.datum path {
  fill: none;
  stroke: #8e8e8e;
  stroke-width: 0.8;
}
.datum.faint path {
  stroke: #97a2ae;
}
.datum-end {
  fill: none;
  stroke: #999;
  stroke-width: 0.8;
}
.edge {
  fill: none;
  stroke: #111;
  stroke-width: 1;
}
.sketch {
  stroke: #000;
}
.center {
  fill: none;
  stroke: #111;
  stroke-width: 1;
  stroke-dasharray: 30 3 6 3;
}
.center.vertical {
  stroke-dasharray: 38 3 5 3;
}
.center.short {
  stroke-dasharray: 17 6;
}
.dim-text {
  font: 14.5px "Liberation Sans", sans-serif;
  fill: #2a2e7c;
}
.float-bar {
  position: absolute;
  left: 547px;
  top: 8px;
  display: flex;
  padding: 3px 1px;
  background: #fbfbfb;
  border: 1px solid #bcbcbc;
}
.fb {
  width: 26.3px;
  height: 23px;
  box-sizing: border-box;
  display: flex;
  align-items: center;
  justify-content: center;
}
.fb.on {
  background: #d2d6d6;
  border: 1px solid #c4c4c4;
}

/* 状态栏 */
.statusbar {
  height: 34px;
  box-sizing: border-box;
  flex: none;
  background: #fdfdfd;
  border-top: 1px solid #c8c8c8;
  display: flex;
  align-items: center;
  padding: 0 2px 0 6px;
}
.st-btn {
  width: 24px;
  height: 24px;
  margin-right: 1px;
  display: flex;
  align-items: center;
  justify-content: center;
}
.st-btn.boxed {
  background: #e8e8e8;
  border: 1px solid #ddd;
  box-sizing: border-box;
}
.st-sep {
  flex: none;
  width: 1px;
  height: 26px;
  background: #d4d4d4;
  margin-left: 7px;
}
.st-sep.far {
  margin-left: 0;
}
.bullet {
  flex: none;
  width: 5px;
  height: 5px;
  border-radius: 50%;
  background: #1e6a80;
  margin: 0 4px 0 7px;
}
.msg {
  flex: 1;
  min-width: 0;
  font-size: 11px;
  white-space: nowrap;
}
.finder {
  flex: none;
  width: 46px;
  height: 24px;
  box-sizing: border-box;
  margin-left: 41px;
  border-left: 1px solid #ddd;
  border-right: 1px solid #ddd;
  display: flex;
  align-items: center;
  justify-content: space-between;
  padding-left: 4px;
}
.finder em {
  width: 15px;
  height: 100%;
  background: #dcdcdc;
  display: flex;
  align-items: center;
  justify-content: center;
}
.picked {
  flex: none;
  margin-left: 5px;
  width: 93px;
}
.filter {
  flex: none;
  width: 176px;
  height: 25px;
  box-sizing: border-box;
  border: 1px solid #b4b4b4;
  background: #f6f6f6;
  display: flex;
  align-items: center;
  padding-left: 7px;
}
.filter span {
  flex: 1;
}
.filter em {
  width: 15px;
  height: 100%;
  border-left: 1px solid #b4b4b4;
  background: #fff;
  display: flex;
  align-items: center;
  justify-content: center;
}
.grip {
  margin: 12px 0 0 5px;
}
</style>
